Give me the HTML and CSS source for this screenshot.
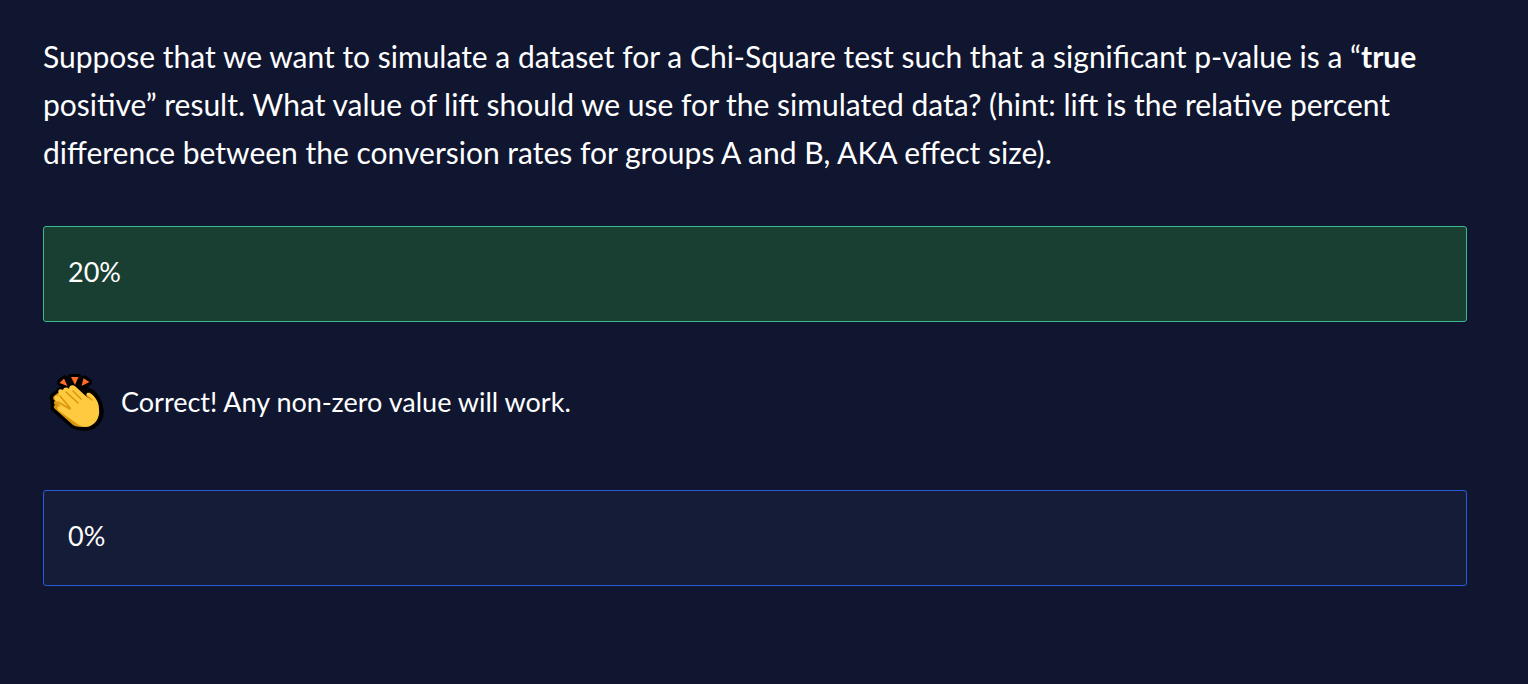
FILE: index.html
```html
<!DOCTYPE html>
<html lang="en">
<head>
<meta charset="utf-8">
<meta name="viewport" content="width=device-width, initial-scale=1">
<title>Quiz: Chi-Square simulation</title>
<link rel="stylesheet" href="styles.css">
</head>
<body>
<main class="quiz">
  <p class="question">Suppose that we want to simulate a dataset for a Chi-Square test such that a significant p-value is a “<strong>true</strong> positive” result. What value of lift should we use for the simulated data? (hint: lift is the relative percent difference between the conversion rates for groups A and B, AKA effect size).</p>
  <button type="button" class="option option-correct">20%</button>
  <div class="feedback" role="status">
    <svg class="clap" viewBox="9 8 56 58" aria-hidden="true">
      <g stroke="#000" stroke-width="7" stroke-linejoin="round" stroke-linecap="round" fill="#000">
        <path d="M20.500 17.500l4-3.500 3 6.500zM31 12.500h7l-3 6zM44 14l4.500 3-6 3.500z"/>
        <path d="M14 31c-2 2 0 4 1 5c-2 1-1 3 0 4l-1 3l18 16c5 4 16 4 21 1c6-4 8-9 7-16c-1-6-3-11-8-16c-3-2-6-1-5 1L36 21c-2-1-3-1-4 1c-3 0-4 1-4 2c-3 0-4 1-4 2c-4-1-5 0-5 2z"/>
        <path d="M24 20h21v8H30z"/>
      </g>
      <path fill="#ff6a26" d="M19.500 18l4.500-4.500 3.500 7.500zM31 12h7.500l-3.500 8zM43.500 13.300l6 3.700-8 4z"/>
      <path fill="#d9950c" d="M14 31c-2 2 0 4 1 5c-2 1-1 3 0 4c-2 1-1 3 0 4l18 16c3 2 8 2 12 2L40 45 19 27z"/>
      <path fill="#ffc940" d="M19 28c-2-3 1-5 4-3c1-3 4-3 6-1c0-4 4-5 7-2l13 12c-4-4-3-7 1-6c6 4 9 10 9 16c1 7-2 13-7 16c-4 3-9 2-13 0L19 46c-3-3-1-6 2-4l-5-6c-3-3-1-7 2-5z"/>
      <path fill="none" stroke="#d9950c" stroke-width="1.500" stroke-linecap="round" d="M33 26l8 8M26 27l12 11M20 31l10 12M18 37l12 7M47 31l5 4"/>
    </svg>
    <p class="feedback-text">Correct! Any non-zero value will work.</p>
  </div>
  <button type="button" class="option">0%</button>
</main>
</body>
</html>
```
FILE: styles.css
```css
* {
  box-sizing: border-box;
}

body {
  margin: 0;
  background: #10162f;
  color: #fff;
  font-family: Lato, "Open Sans", sans-serif;
}

.quiz {
  display: flex;
  flex-direction: column;
  padding: 32px 61px 48px 43px;
}

.question {
  margin: 0 0 50px;
  font-size: 30px;
  line-height: 48px;
}

.option {
  width: 100%;
  padding: 25px 24px 29px;
  border: 1px solid #2a5bd7;
  border-radius: 3px;
  background: #151c38;
  color: inherit;
  font: inherit;
  font-size: 27px;
  line-height: 40px;
  text-align: left;
  cursor: pointer;
}

.option-correct {
  border-color: #3bb88f;
  background: #183f32;
}

.feedback {
  display: flex;
  align-items: center;
  gap: 16px;
  padding: 51px 6px 59px;
}

.clap {
  flex: none;
  width: 56px;
  height: 58px;
}

.feedback-text {
  margin: 0;
  font-size: 27px;
  line-height: 40px;
}
```
